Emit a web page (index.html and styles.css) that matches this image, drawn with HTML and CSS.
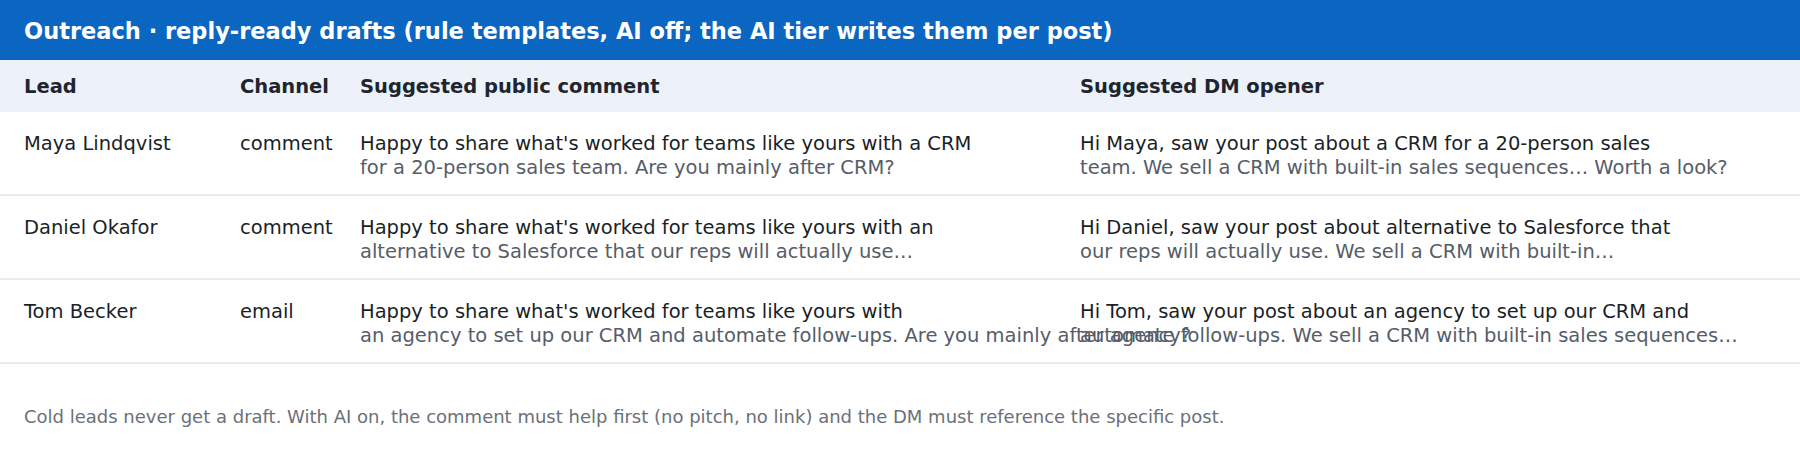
FILE: index.html
```html
<!DOCTYPE html>
<html lang="en">
<head>
<meta charset="utf-8">
<title>Outreach drafts</title>
<link rel="stylesheet" href="styles.css">
</head>
<body>
<section class="panel">
  <header class="panel-title">Outreach · reply-ready drafts (rule templates, AI off; the AI tier writes them per post)</header>
  <table class="drafts">
    <colgroup>
      <col class="c-lead">
      <col class="c-channel">
      <col class="c-comment">
      <col class="c-dm">
    </colgroup>
    <thead>
      <tr>
        <th>Lead</th>
        <th>Channel</th>
        <th>Suggested public comment</th>
        <th>Suggested DM opener</th>
      </tr>
    </thead>
    <tbody>
      <tr>
        <td>Maya Lindqvist</td>
        <td>comment</td>
        <td><span class="l1">Happy to share what's worked for teams like yours with a CRM</span><span class="l2">for a 20-person sales team. Are you mainly after CRM?</span></td>
        <td><span class="l1">Hi Maya, saw your post about a CRM for a 20-person sales</span><span class="l2">team. We sell a CRM with built-in sales sequences… Worth a look?</span></td>
      </tr>
      <tr>
        <td>Daniel Okafor</td>
        <td>comment</td>
        <td><span class="l1">Happy to share what's worked for teams like yours with an</span><span class="l2">alternative to Salesforce that our reps will actually use…</span></td>
        <td><span class="l1">Hi Daniel, saw your post about alternative to Salesforce that</span><span class="l2">our reps will actually use. We sell a CRM with built-in…</span></td>
      </tr>
      <tr>
        <td>Tom Becker</td>
        <td>email</td>
        <td><span class="l1">Happy to share what's worked for teams like yours with</span><span class="l2">an agency to set up our CRM and automate follow-ups. Are you mainly after agency?</span></td>
        <td><span class="l1">Hi Tom, saw your post about an agency to set up our CRM and</span><span class="l2">automate follow-ups. We sell a CRM with built-in sales sequences…</span></td>
      </tr>
    </tbody>
  </table>
  <p class="note">Cold leads never get a draft. With AI on, the comment must help first (no pitch, no link) and the DM must reference the specific post.</p>
</section>
</body>
</html>
```

FILE: styles.css
```css
html, body {
  margin: 0;
  padding: 0;
  background: #ffffff;
}

body {
  font-family: "DejaVu Sans", "Liberation Sans", sans-serif;
  color: #1b1f27;
}

.panel {
  width: 1800px;
}

.panel-title {
  background: #0b66c2;
  color: #ffffff;
  font-weight: bold;
  font-size: 22.5px;
  line-height: 28px;
  height: 60px;
  box-sizing: border-box;
  padding: 17px 24px 15px;
}

.drafts {
  width: 1800px;
  border-collapse: collapse;
  table-layout: fixed;
}

.c-lead { width: 216px; }
.c-channel { width: 120px; }
.c-comment { width: 720px; }
.c-dm { width: 744px; }

.drafts th {
  background: #edf2f9;
  color: #1f2530;
  font-weight: bold;
  font-size: 19.5px;
  line-height: 23.5px;
  text-align: left;
  padding: 15px 0 13.5px 24px;
  white-space: nowrap;
}

.drafts td {
  font-size: 19.5px;
  line-height: 23.5px;
  color: #1b1f27;
  vertical-align: top;
  padding: 20px 0 15px 24px;
  border-bottom: 2px solid #eaecef;
  white-space: nowrap;
}

.l1,
.l2 {
  display: block;
}

.l2 {
  color: #565d69;
}

.note {
  margin: 0;
  padding: 41px 24px 0;
  font-size: 18px;
  line-height: 23px;
  color: #6b7079;
}
```
